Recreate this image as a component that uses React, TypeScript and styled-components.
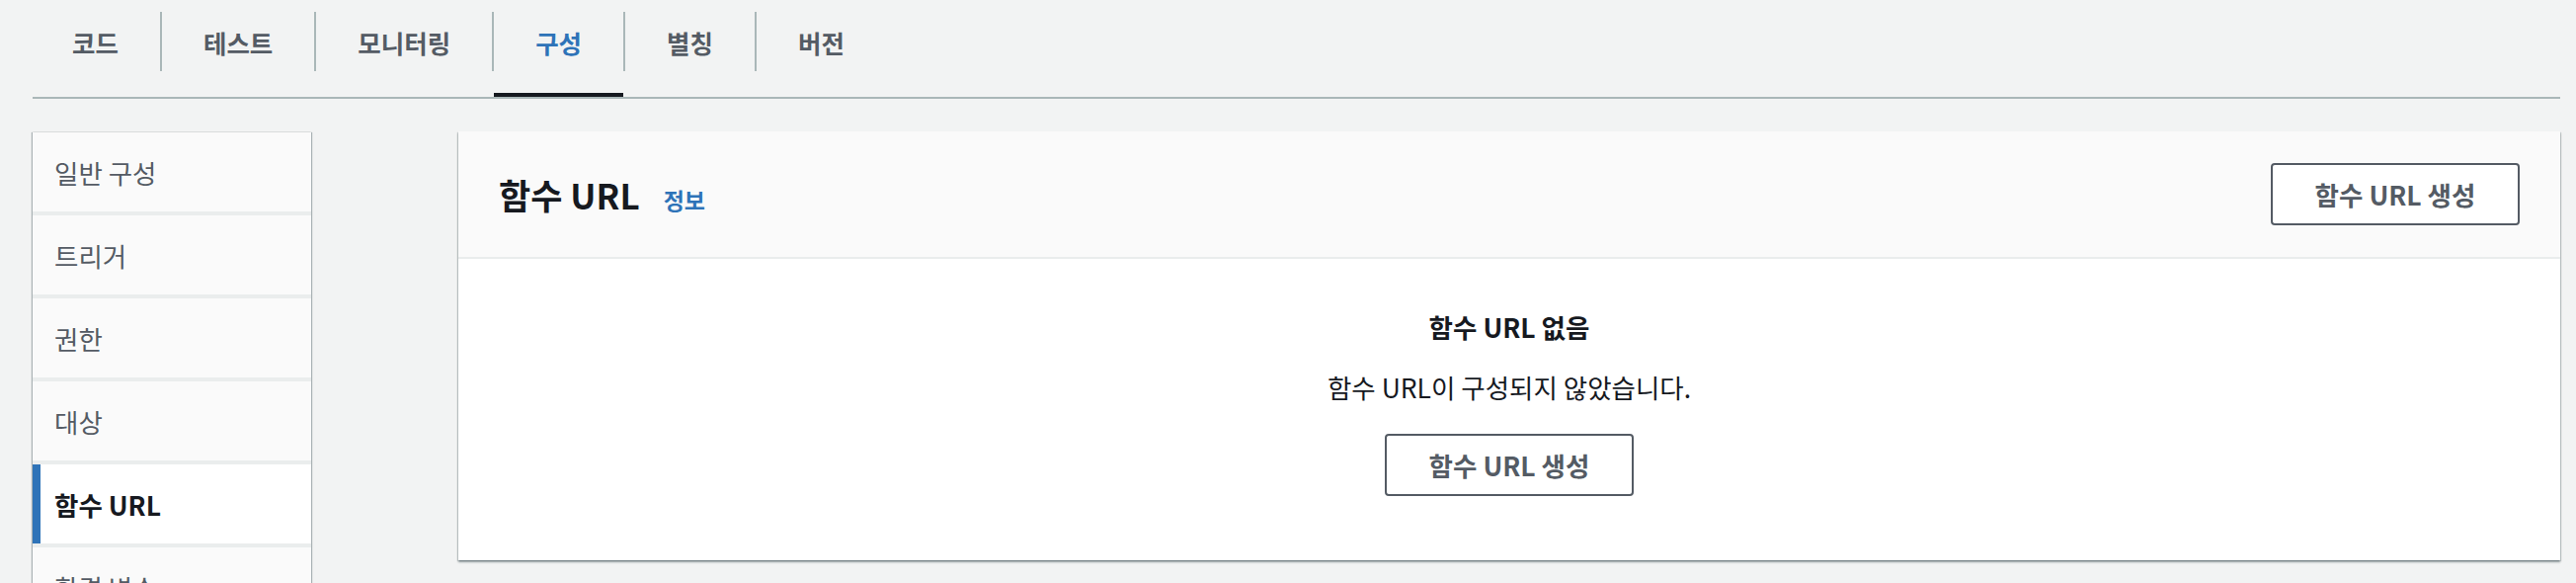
import React from "react";
import styled, { createGlobalStyle } from "styled-components";

const GlobalStyle = createGlobalStyle`
  html, body {
    margin: 0;
    padding: 0;
    background: #f2f3f3;
    font-family: "Noto Sans CJK KR", "Noto Sans", "Liberation Sans", sans-serif;
    color: #16191f;
  }
  * { box-sizing: border-box; }
`;

const Page = styled.div`
  width: 2608px;
  height: 590px;
  overflow: hidden;
  padding: 0 16px 0 33px;
`;

const TabBar = styled.div`
  display: flex;
  align-items: flex-start;
  padding-top: 12px;
  border-bottom: 2px solid #aab7b8;
`;

const Tab = styled.div<{ $active?: boolean; $first?: boolean }>`
  height: 86px;
  padding: 0 42px 0 ${(p) => (p.$first ? "40px" : "42px")};
  border-bottom: 4px solid ${(p) => (p.$active ? "#16191f" : "transparent")};
  display: flex;
  align-items: flex-start;
`;

const TabLabel = styled.span<{ $active?: boolean }>`
  height: 60px;
  display: flex;
  align-items: center;
  font-size: 25.5px;
  font-weight: 700;
  color: ${(p) => (p.$active ? "#2e73b8" : "#545b64")};
`;

const TabSep = styled.div`
  width: 2px;
  height: 60px;
  background: #aab7b8;
`;

const Body = styled.div`
  display: flex;
  align-items: flex-start;
  margin-top: 33px;
`;

const Sidebar = styled.nav`
  width: 282px;
  flex: none;
  display: flex;
  flex-direction: column;
  gap: 4px;
  background: #eaeded;
  box-shadow: 1px 0 1px rgba(0, 28, 36, 0.3), -1px 0 1px rgba(0, 28, 36, 0.3);
  margin-top: 1px;
`;

const SideItem = styled.div<{ $active?: boolean }>`
  height: 80px;
  display: flex;
  align-items: center;
  padding-left: ${(p) => (p.$active ? "14px" : "22px")};
  border-left: ${(p) => (p.$active ? "8px solid #2e73b8" : "0")};
  background: ${(p) => (p.$active ? "#ffffff" : "#fafafa")};
  font-size: 26.5px;
  font-weight: ${(p) => (p.$active ? 700 : 400)};
  color: ${(p) => (p.$active ? "#16191f" : "#545b64")};
`;

const Panel = styled.section`
  flex: 1;
  margin-left: 149px;
  background: #ffffff;
  box-shadow: 0 2px 2px rgba(0, 28, 36, 0.35), 1px 1px 1px rgba(0, 28, 36, 0.15),
    -1px 1px 1px rgba(0, 28, 36, 0.15);
`;

const PanelHeader = styled.header`
  height: 129px;
  padding: 0 41px;
  display: flex;
  align-items: center;
  justify-content: space-between;
  background: #fafafa;
  border-bottom: 2px solid #eaeded;
`;

const TitleGroup = styled.div`
  display: flex;
  align-items: baseline;
  gap: 24px;
`;

const Title = styled.h2`
  margin: 0;
  font-size: 35px;
  font-weight: 700;
  color: #16191f;
`;

const InfoLink = styled.a`
  font-size: 23px;
  font-weight: 700;
  color: #2e73b8;
  text-decoration: none;
`;

const Button = styled.button`
  width: 252px;
  height: 63px;
  border: 2px solid #545b64;
  border-radius: 4px;
  background: #ffffff;
  font-family: inherit;
  font-size: 26.5px;
  font-weight: 700;
  color: #545b64;
  display: flex;
  align-items: center;
  justify-content: center;
  padding: 0;
`;

const EmptyState = styled.div`
  display: flex;
  flex-direction: column;
  align-items: center;
  padding: 49px 0 65px;
`;

const EmptyTitle = styled.div`
  font-size: 26.5px;
  font-weight: 700;
  line-height: 40px;
  color: #16191f;
`;

const EmptyText = styled.p`
  margin: 21px 0 27px;
  font-size: 26.5px;
  line-height: 40px;
  color: #16191f;
`;

const tabs = ["코드", "테스트", "모니터링", "구성", "별칭", "버전"];
const sideItems = ["일반 구성", "트리거", "권한", "대상", "함수 URL", "환경 변수"];

export default function App() {
  return (
    <>
      <GlobalStyle />
      <Page>
        <TabBar>
          {tabs.map((t, i) => (
            <React.Fragment key={t}>
              {i > 0 && <TabSep />}
              <Tab $active={t === "구성"} $first={i === 0}>
                <TabLabel $active={t === "구성"}>{t}</TabLabel>
              </Tab>
            </React.Fragment>
          ))}
        </TabBar>
        <Body>
          <Sidebar>
            {sideItems.map((s) => (
              <SideItem key={s} $active={s === "함수 URL"}>
                {s}
              </SideItem>
            ))}
          </Sidebar>
          <Panel>
            <PanelHeader>
              <TitleGroup>
                <Title>함수 URL</Title>
                <InfoLink href="#">정보</InfoLink>
              </TitleGroup>
              <Button>함수 URL 생성</Button>
            </PanelHeader>
            <EmptyState>
              <EmptyTitle>함수 URL 없음</EmptyTitle>
              <EmptyText>함수 URL이 구성되지 않았습니다.</EmptyText>
              <Button>함수 URL 생성</Button>
            </EmptyState>
          </Panel>
        </Body>
      </Page>
    </>
  );
}
